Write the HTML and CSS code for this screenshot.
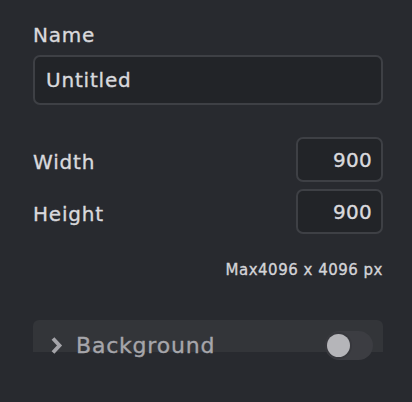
FILE: index.html
```html
<!DOCTYPE html>
<html>
<head>
<meta charset="utf-8">
<link rel="stylesheet" href="styles.css">
</head>
<body>
<div class="panel">
  <div class="field">
    <div class="label">Name</div>
    <div class="input name-input">Untitled</div>
  </div>
  <div class="dims">
    <div class="dim-row">
      <div class="label">Width</div>
      <div class="input num-input">900</div>
    </div>
    <div class="dim-row">
      <div class="label">Height</div>
      <div class="input num-input">900</div>
    </div>
  </div>
  <div class="max">Max4096 x 4096 px</div>
  <div class="section">
    <div class="section-row">
      <svg class="chev" width="14" height="19" viewBox="0 0 14 19"><path d="M3 2.5 L9.5 9.5 L3 16.5" fill="none" stroke="#a4a4a9" stroke-width="3.8" stroke-linecap="butt" stroke-linejoin="miter"/></svg>
      <span class="section-title">Background</span>
      <span class="toggle"><span class="knob"></span></span>
    </div>
  </div>
</div>
</body>
</html>
```

FILE: styles.css
```css
html, body {
  margin: 0;
  padding: 0;
  background: #282a2f;
}
body {
  font-family: "DejaVu Sans", "Open Sans", sans-serif;
  color: #d9d9dd;
  width: 412px;
  height: 402px;
  overflow: hidden;
  -webkit-text-stroke: 0.35px currentColor;
}
.panel {
  padding: 22px 29px 0 33px;
  display: flex;
  flex-direction: column;
}
.label {
  font-size: 20px;
  line-height: 26px;
  letter-spacing: 0.8px;
  color: #d9d9dd;
}
.field {
  display: flex;
  flex-direction: column;
  gap: 7px;
}
.input {
  box-sizing: border-box;
  background: #222428;
  border: 2px solid #3e4045;
  border-radius: 7px;
  font-size: 20px;
  letter-spacing: 0.8px;
  color: #d9d9dd;
  display: flex;
  align-items: center;
}
.name-input {
  height: 50px;
  padding-left: 11px;
}
.dims {
  margin-top: 32px;
  display: flex;
  flex-direction: column;
  gap: 7px;
}
.dim-row {
  display: flex;
  justify-content: space-between;
  align-items: center;
}
.dim-row .label {
  padding-top: 4px;
}
.num-input {
  width: 87px;
  height: 45px;
  justify-content: flex-end;
  padding-right: 9px;
  letter-spacing: 0.3px;
}
.max {
  margin-top: 26px;
  text-align: right;
  font-size: 15px;
  line-height: 20px;
  letter-spacing: 0.5px;
  color: #d4d4d8;
}
.section {
  margin-top: 40px;
  height: 32px;
  background: #333539;
  border-radius: 6px 6px 0 0;
}
.section-row {
  height: 50px;
  display: flex;
  align-items: center;
  padding-left: 17px;
  padding-right: 10px;
}
.chev {
  flex: none;
}
.section-title {
  margin-left: 12px;
  font-size: 22px;
  letter-spacing: 0.8px;
  color: #a6a6ab;
  flex: 1;
}
.toggle {
  width: 48px;
  height: 29px;
  border-radius: 15px;
  background: #3c3d42;
  display: flex;
  align-items: center;
  padding-left: 2px;
  box-sizing: border-box;
}
.knob {
  width: 23px;
  height: 23px;
  border-radius: 50%;
  background: #b5b5b9;
  box-shadow: 0 0 0 2px #37383d;
}
```
